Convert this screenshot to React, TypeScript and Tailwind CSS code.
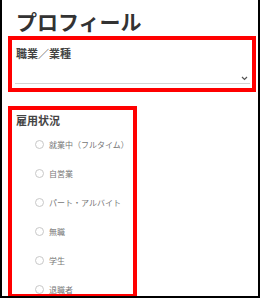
const statuses = ["就業中（フルタイム）", "自営業", "パート・アルバイト", "無職", "学生", "退職者"];

export default function App() {
  return (
    <div
      className="w-[260px] h-[298px] bg-white border-x-2 border-b-2 border-black overflow-hidden"
      style={{ fontFamily: '"Noto Sans CJK JP", "Noto Sans", sans-serif' }}
    >
      <h1 className="pl-[14px] pt-[7px] text-[21px] leading-[28px] font-bold text-[#333]">プロフィール</h1>

      {/* 職業 */}
      <div className="ml-[6px] mr-[2px] mt-[1px] border-4 border-[#f00] pt-[6px] pb-[4px] pl-[3px] pr-[2px]">
        <p className="pl-[1px] text-[11px] leading-[14px] font-bold text-[#444]">職業／業種</p>
        <div className="h-[24px] border-b border-[#d4d4d4] flex items-end justify-end pb-[2px] pr-[2px]">
          <svg width="7" height="5" viewBox="0 0 7 5" fill="none">
            <path d="M1 1l2.5 2.5L6 1" stroke="#555" strokeWidth="1.2" />
          </svg>
        </div>
      </div>

      {/* 雇用状況 */}
      <div className="ml-[6px] mt-[14px] w-[129px] h-[192px] border-4 border-[#f00] pt-[3px] pl-[4px]">
        <p className="text-[11px] leading-[14px] font-bold text-[#444]">雇用状況</p>
        <ul className="mt-[3px]">
          {statuses.map((s) => (
            <li key={s} className="h-[29px] flex items-center gap-[5px] pl-[19px]">
              <span className="w-[9px] h-[9px] rounded-full border border-[#c8c8c8] shrink-0" />
              <span className="text-[8px] leading-[10px] text-[#777] whitespace-nowrap">{s}</span>
            </li>
          ))}
        </ul>
      </div>
    </div>
  );
}
